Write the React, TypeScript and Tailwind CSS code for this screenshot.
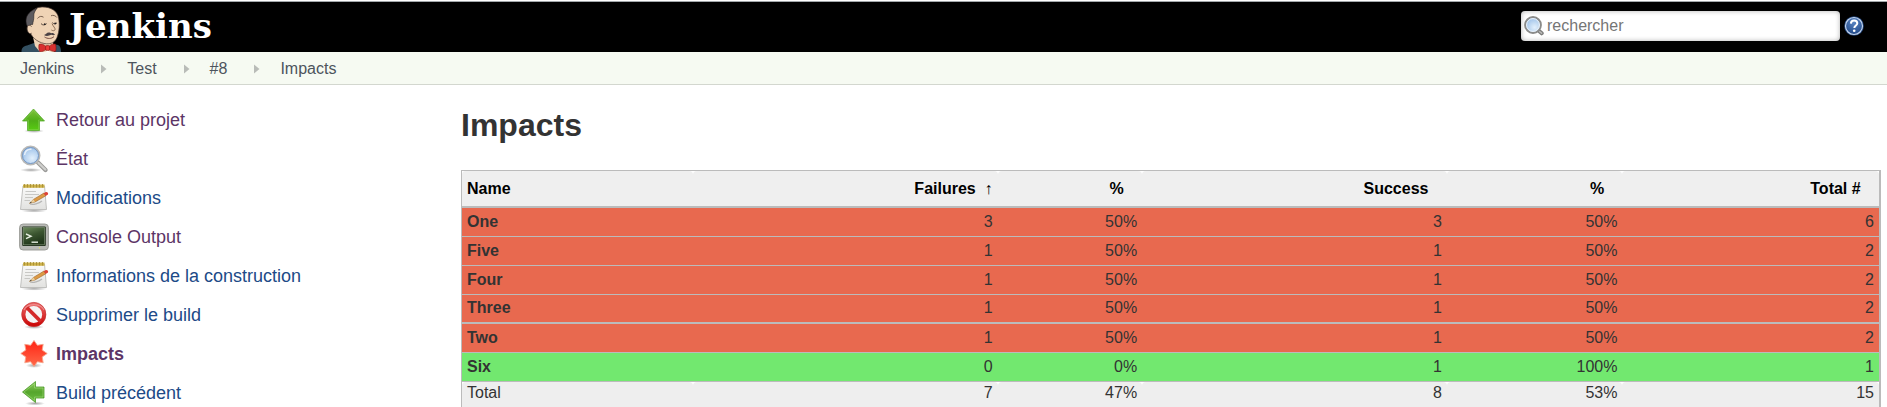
import type { ReactNode } from "react";

function ButlerLogo() {
  return (
    <svg viewBox="0 0 42 46" className="h-[46px] w-[42px]" aria-hidden="true">
      <path d="M1.5 46 C1.5 42 3.5 40 7 39.5 L14 37 L32 38 L38 39 C40.5 40 41 43 41 46 Z" fill="#335061" />
      <path d="M13 31 L15 40 L20 46 L34 46 L33 36 Z" fill="#efd3b5" />
      <path d="M9.5 20 C8 9 12 1.2 22 1 C31 0.8 37.5 5 38.6 12 C39.6 18 39.6 25 37 31.5 C35 36.5 31 38 26.5 37.8 C20 37.4 12.5 33 10 26 Z" fill="#efd3b5" stroke="#4a3a32" strokeWidth="0.7" />
      <path d="M8.2 21.5 C4.8 17 5.6 10.5 9 7.2 C11 4.8 14 3.2 17 2.2 C15 5 13.6 7 13.8 10 C14 13.5 13 15.5 12.6 18.5 C11 18 9.4 19 8.2 21.5 Z" fill="#5d5b5f" stroke="#231f20" strokeWidth="0.6" />
      <path d="M11.6 20.5 C9 17.8 6.6 20 7.2 23.5 C7.6 26.4 9.6 28.6 11.6 27.2" fill="#efd3b5" stroke="#4a3a32" strokeWidth="0.8" />
      <path d="M17.5 12.5 C19 10.2 21.5 9.8 23.5 11.2 M31 9.8 C33 8.8 35.6 9.6 37 11.6" fill="none" stroke="#6b5443" strokeWidth="0.9" />
      <path d="M21 17.6 C22.4 19.4 25.2 19.4 26.6 17.6 M32.4 16.6 C33.6 18.2 35.8 18.2 37 16.8" fill="none" stroke="#4a3a32" strokeWidth="0.9" />
      <circle cx="24.8" cy="18.2" r="0.9" fill="#231f20" />
      <circle cx="35.2" cy="17.4" r="0.9" fill="#231f20" />
      <path d="M32 17.5 C33 20.5 35.6 22 35 23.8 C34.4 25.2 32.6 24.8 31.4 24" fill="none" stroke="#80614a" strokeWidth="0.9" />
      <path d="M24 29 C25.6 28.6 26.6 26.4 28.8 26.4 C30 26.4 30.6 27 31.4 27.2 C32.8 26.8 34 27.4 35 28.8 C33.6 29.6 32.4 29 31.2 28.8 C28.8 30 26 30.4 24 29 Z" fill="#4b4245" />
      <path d="M24.5 31 C27.5 33 31.5 33 34 30.6" fill="none" stroke="#6b4038" strokeWidth="0.9" />
      <path d="M19 38.5 C21.5 37.4 24 38.6 26 40.4 L29 40.4 C31 38.4 33.4 37.4 35.6 38.2 C36.2 40.6 36.2 43 35.6 45.4 C33 45.8 31 44.6 29 43.6 L26 43.6 C24 45 22 46 19.6 45.6 C18.8 43 18.6 41 19 38.5 Z" fill="#d8302f" stroke="#81140f" strokeWidth="0.6" />
      <rect x="25.6" y="39.6" width="4" height="4.8" rx="1.2" fill="#ef3d3a" stroke="#81140f" strokeWidth="0.6" />
      <path d="M25 46 L27.5 44.8 L31 46 Z" fill="#fff" />
    </svg>
  );
}

function Icon({ children }: { children: ReactNode }) {
  return (
    <svg viewBox="0 0 30 30" className="h-[30px] w-[30px] shrink-0" aria-hidden="true">
      {children}
    </svg>
  );
}

const gradients = (
  <svg className="absolute h-0 w-0" aria-hidden="true">
    <defs>
      <linearGradient id="green" x1="0" y1="0" x2="0" y2="1">
        <stop offset="0" stopColor="#7fc13c" />
        <stop offset="0.55" stopColor="#4fae17" />
        <stop offset="1" stopColor="#58cc12" />
      </linearGradient>
      <linearGradient id="leaf" x1="0" y1="0" x2="0" y2="1">
        <stop offset="0" stopColor="#8fcf5c" />
        <stop offset="0.5" stopColor="#55a52c" />
        <stop offset="1" stopColor="#6cc043" />
      </linearGradient>
      <radialGradient id="lens" cx="0.6" cy="0.65" r="0.7">
        <stop offset="0" stopColor="#e3f0fc" />
        <stop offset="1" stopColor="#94bbe6" />
      </radialGradient>
      <linearGradient id="red" x1="0" y1="0" x2="0" y2="1">
        <stop offset="0" stopColor="#ea6464" />
        <stop offset="1" stopColor="#cc0a0a" />
      </linearGradient>
      <linearGradient id="burst" x1="0" y1="0" x2="0" y2="1">
        <stop offset="0" stopColor="#ff2414" />
        <stop offset="1" stopColor="#ff6a4a" />
      </linearGradient>
      <linearGradient id="paper" x1="0" y1="0" x2="0" y2="1">
        <stop offset="0" stopColor="#fbfbfa" />
        <stop offset="1" stopColor="#e2e2e0" />
      </linearGradient>
      <linearGradient id="screen" x1="0" y1="0" x2="0.4" y2="1">
        <stop offset="0" stopColor="#6c8a5c" />
        <stop offset="0.5" stopColor="#3b5530" />
        <stop offset="1" stopColor="#20361a" />
      </linearGradient>
      <radialGradient id="help" cx="0.5" cy="0.25" r="0.8">
        <stop offset="0" stopColor="#5a86c4" />
        <stop offset="1" stopColor="#1d4585" />
      </radialGradient>
      <radialGradient id="shade">
        <stop offset="0" stopColor="#000" stopOpacity="0.35" />
        <stop offset="1" stopColor="#000" stopOpacity="0" />
      </radialGradient>
    </defs>
  </svg>
);

function ArrowUp() {
  return (
    <Icon>
      <ellipse cx="15" cy="26" rx="10" ry="2" fill="url(#shade)" />
      <path d="M14.5 4 L25.5 16 H20.5 V25.5 H8.5 V16 H3.5 Z" fill="url(#green)" stroke="#5cae30" strokeWidth="0.8" strokeLinejoin="round" />
      <path d="M14.5 5.6 L23.2 15 H19.5 V24.5 H9.5 V15 H5.8 Z" fill="none" stroke="#a5dc78" strokeOpacity="0.4" strokeWidth="0.8" />
    </Icon>
  );
}

function ArrowLeft() {
  return (
    <Icon>
      <ellipse cx="16" cy="25.5" rx="10" ry="2" fill="url(#shade)" />
      <path d="M3.5 14 L16.5 3.5 V9 H25 V20 H16.5 V24.5 Z" fill="url(#leaf)" stroke="#4c9a2a" strokeWidth="0.8" strokeLinejoin="round" />
      <path d="M5 14 L15.5 5.6 V10 H24 V19 H15.5 V22.4 Z" fill="none" stroke="#b2e28c" strokeOpacity="0.6" strokeWidth="0.8" />
    </Icon>
  );
}

function Magnifier() {
  return (
    <Icon>
      <ellipse cx="12" cy="26" rx="11" ry="2" fill="url(#shade)" />
      <path d="M18.5 18 L26.5 26" stroke="#9a9a98" strokeWidth="4.4" strokeLinecap="round" />
      <path d="M19.5 19 L26.3 25.5" stroke="#cfcfcd" strokeWidth="2.4" strokeLinecap="round" />
      <circle cx="11.5" cy="11.5" r="9" fill="url(#lens)" stroke="#b9b9b7" strokeWidth="2" />
      <circle cx="11.5" cy="11.5" r="8" fill="none" stroke="#6c93c6" strokeWidth="0.9" />
      <path d="M5.5 11 C6 7 9 5 12.5 5.2" fill="none" stroke="#fff" strokeOpacity="0.7" strokeWidth="1.5" />
    </Icon>
  );
}

function Notepad() {
  return (
    <Icon>
      <ellipse cx="15" cy="27.8" rx="13" ry="1.8" fill="url(#shade)" />
      <path d="M4 3 H25.5 L27.5 26.5 H1.5 Z" fill="url(#paper)" stroke="#b4b4b1" strokeWidth="0.8" strokeLinejoin="round" />
      <path d="M4 1.5 H25.5 V4.8 H4 Z" fill="#cdb24a" />
      <path d="M5.5 1 V4.5 M8.5 1 V4.5 M11.5 1 V4.5 M14.5 1 V4.5 M17.5 1 V4.5 M20.5 1 V4.5 M23.5 1 V4.5" stroke="#a38a30" strokeWidth="0.8" />
      <path d="M6.5 8.5 H17 M6 11.5 H20 M6 14.5 H14 M5.5 17.5 H11" stroke="#c3c3c0" strokeWidth="0.9" />
      <path d="M11 21 C14 22 20 20.5 23 18" fill="none" stroke="#555" strokeOpacity="0.35" strokeWidth="1.2" />
      <path d="M10.5 20.3 L14.5 16.4 L25 10 L26.8 12.8 L16 19 Z" fill="#dd9a45" stroke="#9a6524" strokeWidth="0.6" />
      <path d="M10.5 20.3 L14.5 16.4 L16 19 Z" fill="#e8cfa0" />
      <path d="M10.5 20.3 L12 18.8 L12.7 19.8 Z" fill="#333" />
      <path d="M24.6 10.2 L26.8 9 C28.6 8.6 29.8 10.4 28.8 11.6 L26.7 12.9 Z" fill="#dc4438" />
    </Icon>
  );
}

function Terminal() {
  return (
    <Icon>
      <rect x="0.6" y="2" width="28.8" height="26" rx="3.5" fill="#b9bab6" stroke="#949591" strokeWidth="0.9" />
      <rect x="3.2" y="4.5" width="23.6" height="19.5" rx="1" fill="#20301b" />
      <rect x="4.4" y="5.6" width="21.2" height="17.2" fill="url(#screen)" stroke="#86987c" strokeWidth="0.6" />
      <path d="M7 12 L12 14.2 L7 16.6" fill="none" stroke="#e6eee0" strokeWidth="1.4" />
      <path d="M12.5 20.2 H19" stroke="#e6eee0" strokeWidth="1.4" />
      <circle cx="20.5" cy="25.7" r="0.7" fill="#e0e06a" />
    </Icon>
  );
}

function Forbidden() {
  return (
    <Icon>
      <ellipse cx="15" cy="27" rx="10" ry="2" fill="url(#shade)" />
      <circle cx="14.8" cy="14.5" r="10.3" fill="#f6f4f4" stroke="url(#red)" strokeWidth="3.8" />
      <path d="M7.8 7.5 L21.8 21.5" stroke="#d42a2a" strokeWidth="3.8" />
      <circle cx="14.8" cy="14.5" r="12.1" fill="none" stroke="#c03030" strokeWidth="0.6" />
      <path d="M5 10 C8 3 22 3 25 10" fill="none" stroke="#fff" strokeOpacity="0.35" strokeWidth="1.2" />
    </Icon>
  );
}

function Burst() {
  return (
    <Icon>
      <ellipse cx="15" cy="26.5" rx="8" ry="2.4" fill="url(#shade)" />
      <path d="M15 1.5 L18.4 6.3 L24.2 5.3 L23.2 11.1 L28.2 14.5 L23.2 17.9 L24.2 23.8 L18.4 22.7 L15 27.5 L11.6 22.7 L5.8 23.8 L6.8 17.9 L1.8 14.5 L6.8 11.1 L5.8 5.3 L11.6 6.3 Z" fill="url(#burst)" stroke="#f5a68c" strokeWidth="0.9" strokeLinejoin="round" />
    </Icon>
  );
}

const crumbs = ["Jenkins", "Test", "#8", "Impacts"];

const tasks = [
  { label: "Retour au projet", icon: <ArrowUp />, style: "text-[#5c3566]" },
  { label: "État", icon: <Magnifier />, style: "text-[#5c3566]" },
  { label: "Modifications", icon: <Notepad />, style: "text-[#204a87]" },
  { label: "Console Output", icon: <Terminal />, style: "text-[#5c3566]" },
  { label: "Informations de la construction", icon: <Notepad />, style: "text-[#204a87]" },
  { label: "Supprimer le build", icon: <Forbidden />, style: "text-[#204a87]" },
  { label: "Impacts", icon: <Burst />, style: "font-bold text-[#5c3566]" },
  { label: "Build précédent", icon: <ArrowLeft />, style: "text-[#204a87]" },
];

const columns = [
  { label: "Name", width: "w-[16.3%]" },
  { label: "Failures", width: "w-[21.5%]", sorted: true },
  { label: "%", width: "w-[10.2%]" },
  { label: "Success", width: "w-[21.5%]" },
  { label: "%", width: "w-[12.4%]" },
  { label: "Total #", width: "w-[18.1%]" },
];

const red = "bg-[#e8694f]";
const green = "bg-[#72e86f]";
const thin = "border-b";
const thick = "border-b-2";

const rows = [
  { name: "One", values: ["3", "50%", "3", "50%", "6"], color: red, line: thin },
  { name: "Five", values: ["1", "50%", "1", "50%", "2"], color: red, line: thin },
  { name: "Four", values: ["1", "50%", "1", "50%", "2"], color: red, line: thin },
  { name: "Three", values: ["1", "50%", "1", "50%", "2"], color: red, line: thick },
  { name: "Two", values: ["1", "50%", "1", "50%", "2"], color: red, line: thin },
  { name: "Six", values: ["0", "0%", "1", "100%", "1"], color: green, line: thin },
];

const totals = ["7", "47%", "8", "53%", "15"];

export default function App() {
  return (
    <div className="min-h-screen bg-white font-['Liberation_Sans',Arial,sans-serif] text-base leading-5 text-[#333]">
      {gradients}
      <header className="mt-px flex h-[51px] items-center justify-between border-t border-[#a3a8ab] bg-black pr-[23px] pl-5">
        <a href="#" className="flex h-full items-end gap-[7px] text-white">
          <ButlerLogo />
          <span className="pb-[6px] font-['DejaVu_Serif',serif] text-[34px] leading-10 font-bold">Jenkins</span>
        </a>
        <form className="flex items-center gap-1 pb-[3px]" onSubmit={(e) => e.preventDefault()}>
          <label className="flex h-[30px] w-[319px] items-center gap-[3px] rounded bg-white pl-[3px] shadow-[inset_0_0_5px_rgba(0,0,0,0.3)]">
            <svg viewBox="0 0 20 20" className="h-5 w-5 shrink-0" aria-hidden="true">
              <path d="M14.5 14.5 L17.7 17.3" stroke="#7b7b79" strokeWidth="4" strokeLinecap="round" />
              <path d="M15.5 15.5 L17.6 17.2" stroke="#b8b8b6" strokeWidth="1.6" strokeLinecap="round" />
              <circle cx="9" cy="9" r="7.9" fill="url(#lens)" stroke="#8b8b89" strokeWidth="2" />
              <circle cx="9" cy="9" r="6.4" fill="none" stroke="#eef4fa" strokeWidth="1" />
            </svg>
            <input
              type="text"
              aria-label="rechercher"
              placeholder="rechercher"
              className="min-w-0 flex-1 bg-transparent leading-5 outline-none placeholder:text-[#757575]"
            />
          </label>
          <a href="#" aria-label="Aide">
            <svg viewBox="0 0 20 20" className="h-5 w-5" aria-hidden="true">
              <circle cx="10" cy="10" r="9.8" fill="#21467f" />
              <circle cx="10" cy="10" r="8.5" fill="url(#help)" stroke="#c3d3ea" strokeWidth="1.2" />
              <path d="M6.9 7.6 C7 5.4 8.4 4.5 10.1 4.5 C12 4.5 13.3 5.6 13.3 7.3 C13.3 9.5 10.4 9.5 10.3 12" fill="none" stroke="#fff" strokeWidth="2" />
              <circle cx="10.2" cy="14.8" r="1.3" fill="#fff" />
            </svg>
          </a>
        </form>
      </header>

      <nav aria-label="Breadcrumb" className="border-b border-[#d3d7cf] bg-[#f6faf2]">
        <ol className="flex h-8 items-center pt-px pl-5 text-[#4d545d]">
          {crumbs.map((crumb, i) => (
            <li key={crumb} className="flex items-center">
              {i > 0 && (
                <svg viewBox="0 0 6 10" className="mr-5 ml-[27px] h-[10px] w-[6px]" aria-hidden="true">
                  <path d="M0 0.5 L5.5 5 L0 9.5 Z" fill="#b9bcb8" />
                </svg>
              )}
              <a href="#">{crumb}</a>
            </li>
          ))}
        </ol>
      </nav>

      <div className="flex pr-[6px]">
        <aside className="w-[461px] shrink-0 pt-5 pl-[19px]">
          <ul className="flex flex-col gap-[9px]">
            {tasks.map((task) => (
              <li key={task.label}>
                <a href="#" className={`flex items-center gap-[7px] text-lg leading-[30px] ${task.style}`}>
                  {task.icon}
                  {task.label}
                </a>
              </li>
            ))}
          </ul>
        </aside>

        <main className="min-w-0 flex-1 pt-5">
          <h1 className="mb-[25px] text-[32px] leading-10 font-bold">Impacts</h1>
          <table className="w-full table-fixed border-separate border-spacing-0 border-t border-r-2 border-l border-[#bbb]">
            <thead>
              <tr className="h-[37px] text-right text-black">
                {columns.map((column, i) => (
                  <th
                    key={i}
                    scope="col"
                    className={`rounded-t border-b-2 border-[#bbb] bg-[#efefef] px-[5px] py-0 font-bold first:text-left ${column.width}`}
                  >
                    {column.label}
                    {i > 0 && (column.sorted ? "\u00a0\u00a0↑" : "\u00a0\u00a0\u00a0")}
                  </th>
                ))}
              </tr>
            </thead>
            <tbody>
              {rows.map((row) => (
                <tr key={row.name} className={`h-[29px] text-right ${row.color}`}>
                  <th scope="row" className={`border-[#bbb] px-[5px] pt-0 pb-px text-left font-bold ${row.line}`}>
                    {row.name}
                  </th>
                  {row.values.map((value, i) => (
                    <td key={i} className={`border-[#bbb] px-[5px] pt-0 pb-px ${row.line}`}>
                      {value}
                    </td>
                  ))}
                </tr>
              ))}
            </tbody>
            <tfoot>
              <tr className="h-[25px] text-right">
                <th scope="row" className="rounded-t bg-[#eee] px-[5px] pt-0 pb-[3px] text-left font-normal">
                  Total
                </th>
                {totals.map((value, i) => (
                  <td key={i} className="rounded-t bg-[#eee] px-[5px] pt-0 pb-[3px]">
                    {value}
                  </td>
                ))}
              </tr>
            </tfoot>
          </table>
        </main>
      </div>
    </div>
  );
}
